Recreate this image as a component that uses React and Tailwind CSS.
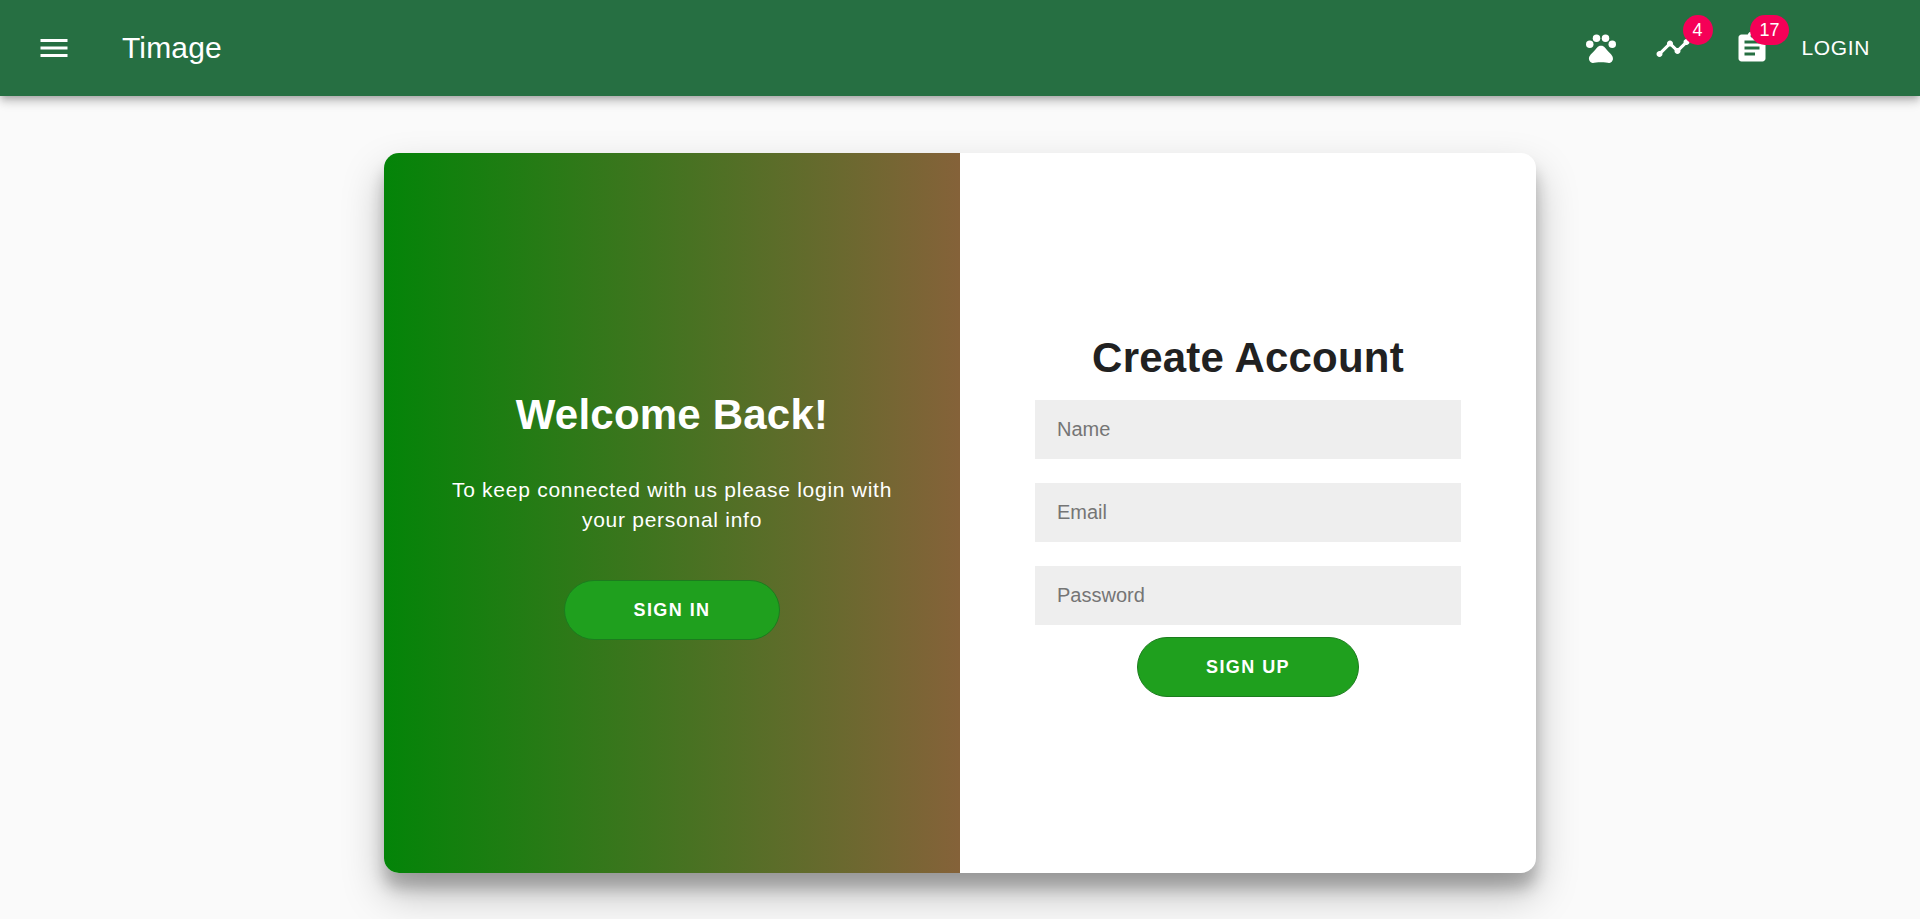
import React, { useState } from 'react';
import { MdAssignment, MdMenu, MdPets, MdTimeline } from 'react-icons/md';

const fields = [
  { name: 'name', type: 'text', label: 'Name' },
  { name: 'email', type: 'email', label: 'Email' },
  { name: 'password', type: 'password', label: 'Password' },
];

const Badge = ({ children }) => (
  <span className="flex h-[30px] min-w-[30px] items-center justify-center rounded-full bg-[#f50057] px-[9px] text-lg leading-none text-white">
    {children}
  </span>
);

const PillButton = ({ children, type = 'button' }) => (
  <button
    type={type}
    className="h-[60px] rounded-full border border-[#1c7c1e] bg-[#1fa01e] px-[68px] text-lg font-bold tracking-[0.08em] text-white uppercase"
  >
    {children}
  </button>
);

const Header = () => (
  <header className="relative z-10 flex h-24 items-center justify-between bg-[#266f42] pr-[38px] pl-9 text-white shadow-[0_3px_6px_-2px_rgba(0,0,0,0.2),0_6px_8px_0_rgba(0,0,0,0.14),0_2px_15px_0_rgba(0,0,0,0.12)]">
    <div className="flex items-center gap-[50px]">
      <button type="button" aria-label="Menu">
        <MdMenu className="size-9" />
      </button>
      <a href="#home" className="text-3xl tracking-[0.005em]">
        Timage
      </a>
    </div>

    <nav className="flex items-center">
      <a href="#pets" aria-label="Pets" className="mr-9">
        <MdPets className="size-9" />
      </a>
      <a href="#activity" aria-label="Activity" className="relative mr-9 pr-[7px]">
        <MdTimeline className="size-9" />
        <span className="absolute top-0 right-0 translate-x-1/2 -translate-y-1/2">
          <Badge>4</Badge>
        </span>
      </a>
      <a href="#tasks" aria-label="Tasks" className="relative mr-5">
        <MdAssignment className="size-9" />
        <span className="absolute top-0 right-0 translate-x-1/2 -translate-y-1/2">
          <Badge>17</Badge>
        </span>
      </a>
      <button type="button" className="px-3 text-[21px] tracking-[0.03em] uppercase">
        Login
      </button>
    </nav>
  </header>
);

export default function App() {
  const [form, setForm] = useState({ name: '', email: '', password: '' });

  const handleChange = (e) => {
    setForm({ ...form, [e.target.name]: e.target.value });
  };

  return (
    <div className="min-h-screen bg-[#fafafa] font-['Liberation_Sans',Arial,sans-serif] text-[#212121]">
      <Header />

      <main className="flex justify-center px-6 pt-[57px] pb-[46px]">
        <div className="grid min-h-[720px] w-full max-w-[1152px] grid-cols-2 overflow-hidden rounded-[15px] bg-white shadow-[0_21px_42px_rgba(0,0,0,0.25),0_15px_15px_rgba(0,0,0,0.22)]">
          {/* Sign in side */}
          <section className="flex flex-col items-center justify-center bg-linear-to-r/srgb from-[#038408] to-[#856239] px-[60px] pb-[2px] text-center text-white">
            <h1 className="text-[42px] leading-[60px] font-bold tracking-[0.005em]">Welcome Back!</h1>
            <p className="mt-[30px] mb-[45px] text-[21px] leading-[30px] tracking-[0.035em]">
              To keep connected with us please login with your personal info
            </p>
            <PillButton>Sign In</PillButton>
          </section>

          {/* Sign up side */}
          <form
            className="flex flex-col items-center justify-center px-[75px] pb-[2px]"
            onSubmit={(e) => e.preventDefault()}
          >
            <h1 className="text-[42px] leading-[60px] font-bold tracking-[0.005em]">Create Account</h1>
            <div className="my-3 flex w-full flex-col gap-6">
              {fields.map((field) => (
                <input
                  key={field.name}
                  type={field.type}
                  name={field.name}
                  aria-label={field.label}
                  placeholder={field.label}
                  value={form[field.name]}
                  onChange={handleChange}
                  className="h-[59px] w-full bg-[#eeeeee] px-[22px] text-xl placeholder:text-[#757575]"
                />
              ))}
            </div>
            <PillButton type="submit">Sign Up</PillButton>
          </form>
        </div>
      </main>
    </div>
  );
}
